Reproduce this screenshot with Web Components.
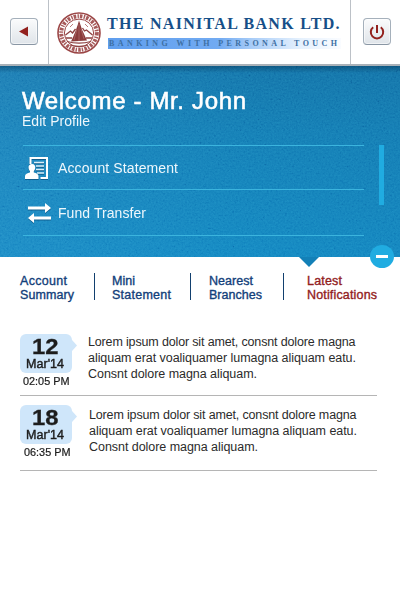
<!DOCTYPE html>
<html lang="en">
<head>
<meta charset="utf-8">
<title>The Nainital Bank Ltd.</title>
<style>
  html, body { margin: 0; background: #fff; }
  body { width: 400px; height: 600px; overflow: hidden; font-family: "Liberation Sans", Arial, sans-serif; }
</style>
</head>
<body>
<bank-app></bank-app>
<script>
const define = (name, html, setup) => customElements.define(name, class extends HTMLElement {
  connectedCallback() {
    if (this.shadowRoot) return;
    const t = document.createElement('template');
    t.innerHTML = html;
    this.attachShadow({ mode: 'open' }).append(t.content.cloneNode(true));
    if (setup) setup(this, this.shadowRoot);
  }
});

/* One line of text fitted to the width in "measure": by tracking, or by widening the glyphs when "wide" is set. */
define('text-line', `
  <style>:host{display:block;white-space:nowrap} span{display:inline-block;vertical-align:top;transform-origin:0 0}</style>
  <span></span>`, (host, root) => {
  const s = root.querySelector('span');
  s.textContent = host.getAttribute('text');
  const want = +host.getAttribute('measure'), w = s.getBoundingClientRect().width;
  if (!want) return;
  if (host.hasAttribute('wide')) s.style.transform = `scaleX(${want / w})`;
  else s.style.letterSpacing = (want - w) / (s.textContent.length - 1) + 'px';
});

define('icon-button', `
  <style>
    :host{display:grid;place-items:center;box-sizing:border-box;width:28px;height:27px;border:1px solid #a5b0bb;border-bottom-color:#8996a4;border-radius:4px;
      background:linear-gradient(#fafbfc,#dfe4e9);box-shadow:inset 0 0 0 1px rgba(255,255,255,.55)}
  </style><slot></slot>`);

define('bank-seal', `
  <style>:host{display:block;width:44px;height:42px} svg{display:block}</style>
  <svg width="44" height="42" viewBox="0 0 44 42" fill="none" stroke="#9b4646">
    <ellipse cx="22" cy="21" rx="21" ry="20" fill="#fff" stroke-width="1.6"/>
    <ellipse cx="22" cy="21" rx="17.8" ry="16.8" stroke="#a65a5a" stroke-width="4" stroke-dasharray="2.6 1.3 1.4 1"/>
    <ellipse cx="22" cy="21" rx="14.6" ry="13.9" fill="#fff" stroke-width="1"/>
    <path d="M22 8.500 Q24.500 18 30 28.500 L14 29.500 Q19.500 18 22 8.500Z" fill="#8a3b3b" stroke="none"/>
    <path d="M22 12V29M20 17l-3 11M24 17l3 10" stroke="#b97b7b" stroke-width=".6"/>
    <path d="M8.500 23l5-4 2 2 3-4M35.500 23l-6-5-2 1-2-3M9 26h6M29 26h6M10 29.500c7 2 17 2 24 0M13 33c5 1.500 13 1.500 18 0" stroke="#8d4040" stroke-width="1.300"/>
    <path d="M13 15l3-3M31 15l-3-3" stroke="#b97b7b"/>
  </svg>`);

define('bank-header', `
  <style>
    :host{display:grid;grid-template-columns:48px 301px 49px;column-gap:1px;height:64px;background:#bcc1c7;border-bottom:2px solid #a9b1b8;position:relative}
    div{background:#fff}
    .side{display:flex;padding-top:18px;box-sizing:border-box}
    .left{padding-left:10px}.right{padding-left:12px}
    .brand{display:flex;padding:12px 0 0 8px;gap:6px;box-sizing:border-box}
    .name{width:236px}
    .title{font:bold 16px/20px "Liberation Serif","Times New Roman",serif;color:#164f88;margin-top:2px}
    .tag{width:233px;height:11px;margin:4px 0 0 1px;background:linear-gradient(90deg,#5f9eee,#72abf2 48%,#a9cdf8 62%,#e4f0fd 82%,#fafcff);
      font:bold 8px/11px "Liberation Serif","Times New Roman",serif;color:#3d6fa3}
    .tag text-line{padding-left:1px}
  </style>
  <div class="side left"><icon-button><svg width="26" height="25" viewBox="0 0 26 25"><path d="M8 12.500 17 7.500v10z" fill="#92201d"/></svg></icon-button></div>
  <div class="brand"><bank-seal></bank-seal>
    <div class="name"><text-line class="title" text="THE NAINITAL BANK LTD." measure="232.5"></text-line>
    <div class="tag"><text-line text="BANKING WITH PERSONAL TOUCH" measure="228"></text-line></div></div>
  </div>
  <div class="side right"><icon-button><svg width="26" height="25" viewBox="0 0 26 25" fill="none" stroke="#92201d" stroke-width="2"><path d="M9.200 8.300a6.200 6.200 0 1 0 7.600 0M13 6v8"/></svg></icon-button></div>`);

customElements.define('menu-entry', class extends HTMLElement {
  connectedCallback() {
    this.attachShadow({ mode: 'open' }).innerHTML = `
      <style>
        :host{display:flex;align-items:center;box-sizing:border-box;border-top:1px solid #3bb4de;width:341px;color:#eef7fc}
        .icon{width:35px;flex:none} ::slotted(svg){display:block;filter:drop-shadow(0 1px 0 rgba(0,40,80,.45))}
        text-line{font-size:14px;line-height:20px;padding-top:1px}
      </style>
      <div class="icon"><slot></slot></div>
      <text-line text="${this.getAttribute('label')}" measure="${this.getAttribute('measure')}"></text-line>`;
  }
});

define('welcome-panel', `
  <style>
    :host{display:block;position:relative;height:191px;color:#fff;isolation:isolate;background:linear-gradient(100deg,rgba(50,145,205,.25),rgba(0,80,150,.04) 60%,rgba(0,70,130,.08)),linear-gradient(#1272a8,#127cb4 35%,#1287c2)}
    .grain{position:absolute;inset:0;width:400px;height:191px;opacity:.35;mix-blend-mode:soft-light}
    .shade{position:absolute;inset:0 0 auto;height:7px;background:linear-gradient(rgba(0,40,70,.4),rgba(0,40,70,0))}
    .body{position:relative;padding:23px 0 0 22px}
    h1{margin:0;font-size:24px;line-height:24px;font-weight:400;-webkit-text-stroke:.55px #fff}
    .edit{font-size:14px;line-height:16px;color:#eef7fc}
    .menu{margin:16px 0 0 1px;width:341px;border-bottom:1px solid #3bb4de}
    menu-entry:nth-child(1){height:44px} menu-entry:nth-child(2){height:46px}
    .bar{position:absolute;left:379px;top:79px;width:5px;height:60px;background:#20ace1}
    .notch{position:absolute;left:299px;top:191px;width:20px;height:10px;background:#1380b7;clip-path:polygon(0 0,100% 0,50% 100%)}
    .fold{position:absolute;left:370px;top:179px;width:24px;height:23px;border-radius:50%;background:#20ace1;display:grid;place-items:center}
    .fold i{width:12px;height:3px;background:#fff}
  </style>
  <svg class="grain"><filter id="g" x="0" y="0" width="1" height="1"><feTurbulence type="fractalNoise" baseFrequency=".55" numOctaves="2" seed="4"/><feColorMatrix type="matrix" values=".6 .6 .6 0 -.4  .6 .6 .6 0 -.4  .6 .6 .6 0 -.4  0 0 0 0 1"/></filter><rect width="400" height="191" filter="url(#g)"/></svg>
  <div class="shade"></div>
  <div class="body">
    <h1><text-line text="Welcome - Mr. John" measure="224"></text-line></h1>
    <text-line class="edit" text="Edit Profile" measure="68"></text-line>
    <div class="menu">
      <menu-entry label="Account Statement" measure="120">
        <svg width="28" height="28" viewBox="0 0 28 28"><path d="M6.500 3H25v22h-7.500v-2H23V5H8.500V10H6.500z" fill="#fff"/><path d="M11 8.500h10M13 12h8M13 15.500h8M14 19h7" stroke="#d9eef8" stroke-width="1.500"/><path d="M9 10c2.500 0 3.500 1.800 3.200 4-.2 1.500-.8 2.500-1.400 3.200v1.300c2.500.8 4.700 1.500 4.700 3.500v3H2v-3c0-2 2.500-2.700 5-3.500v-1.300C6.200 16.400 5.800 15.500 5.600 14 5.300 11.800 6.500 10 9 10z" fill="#fff"/></svg>
      </menu-entry>
      <menu-entry label="Fund Transfer" measure="88">
        <svg width="30" height="24" viewBox="0 0 30 24"><path d="M5 5.500h17V2l6 5-6 5V8.500H5zM28 15.500H11V12l-6 5 6 5v-3.500h17z" fill="#fff"/></svg>
      </menu-entry>
    </div>
  </div>
  <div class="bar"></div><div class="notch"></div><div class="fold"><i></i></div>`);

customElements.define('nav-tab', class extends HTMLElement {
  connectedCallback() {
    const [a, b] = this.getAttribute('lines').split('|'), [m, n] = this.getAttribute('measures').split(',');
    this.attachShadow({ mode: 'open' }).innerHTML = `
      <style>:host{display:block;height:27px;font-size:12.5px;line-height:14px;color:#12407a;-webkit-text-stroke:.35px currentColor;border-right:1px solid #12406f;box-sizing:border-box}
      :host([active]){color:#92201d;border:0} div{padding-top:1px}</style>
      <div><text-line text="${a}" measure="${m}"></text-line><text-line text="${b}" measure="${n}"></text-line></div>`;
  }
});

define('tab-strip', `
  <style>:host{display:grid;grid-template-columns:92px 97px 98px 71px;padding:16px 0 0 20px}
  .a{width:75px}.b{width:79px}.c{width:75px}</style>
  <nav-tab class="a" lines="Account|Summary" measures="47,54"></nav-tab>
  <nav-tab class="b" lines="Mini|Statement" measures="23,59"></nav-tab>
  <nav-tab class="c" lines="Nearest|Branches" measures="44,53"></nav-tab>
  <nav-tab active lines="Latest|Notifications" measures="35,70"></nav-tab>`);

customElements.define('notice-item', class extends HTMLElement {
  connectedCallback() {
    const g = n => this.getAttribute(n);
    this.attachShadow({ mode: 'open' }).innerHTML = `
      <style>
        :host{display:flex;width:357px;box-sizing:border-box;border-bottom:1px solid #b5b5b5;color:#2b2b2b}
        .when{width:68px;flex:none}
        .badge{position:relative;width:52px;height:39px;border-radius:6px;background:#cfe6fa;color:#1c1c1c}
        .badge::after{content:"";position:absolute;left:52px;top:6px;width:5px;height:11px;background:#cfe6fa;clip-path:polygon(0 0,100% 50%,0 100%)}
        .day{font-size:22px;font-weight:700;line-height:24px;padding:1px 0 0 12px;height:23px;-webkit-text-stroke:.3px}
        .month{font-size:12px;line-height:12px;padding-left:6px;-webkit-text-stroke:.4px}
        .time{font-size:10px;line-height:12px;padding:3px 0 0 3px;color:#1c1c1c;-webkit-text-stroke:.2px}
        .text{font-size:12.5px;line-height:16px}
        :host(:nth-of-type(2)) .text{padding:2px 0 0 1px}
        :host(:nth-of-type(2)) .time{padding-left:4px}
      </style>
      <div class="when"><div class="badge">
        <text-line wide class="day" text="${g('day')}" measure="26.5"></text-line>
        <text-line wide class="month" text="Mar'14" measure="38"></text-line></div>
        <text-line wide class="time" text="${g('time')}" measure="46.5"></text-line></div>
      <div class="text">
        <text-line text="Lorem ipsum dolor sit amet, consnt dolore magna" measure="267.5"></text-line>
        <text-line text="aliquam erat voaliquamer lumagna aliquam eatu." measure="268"></text-line>
        <text-line text="Consnt dolore magna aliquam." measure="169"></text-line></div>`;
  }
});

define('bank-app', `
  <style>
    :host{display:block;width:400px;height:600px;background:#fff}
    .list{padding:34px 0 0 20px}
    notice-item{height:62px} notice-item+notice-item{height:66px;margin-top:9px}
  </style>
  <bank-header></bank-header><welcome-panel></welcome-panel><tab-strip></tab-strip>
  <div class="list"><notice-item day="12" time="02:05 PM"></notice-item><notice-item day="18" time="06:35 PM"></notice-item></div>`);
</script>
</body>
</html>
